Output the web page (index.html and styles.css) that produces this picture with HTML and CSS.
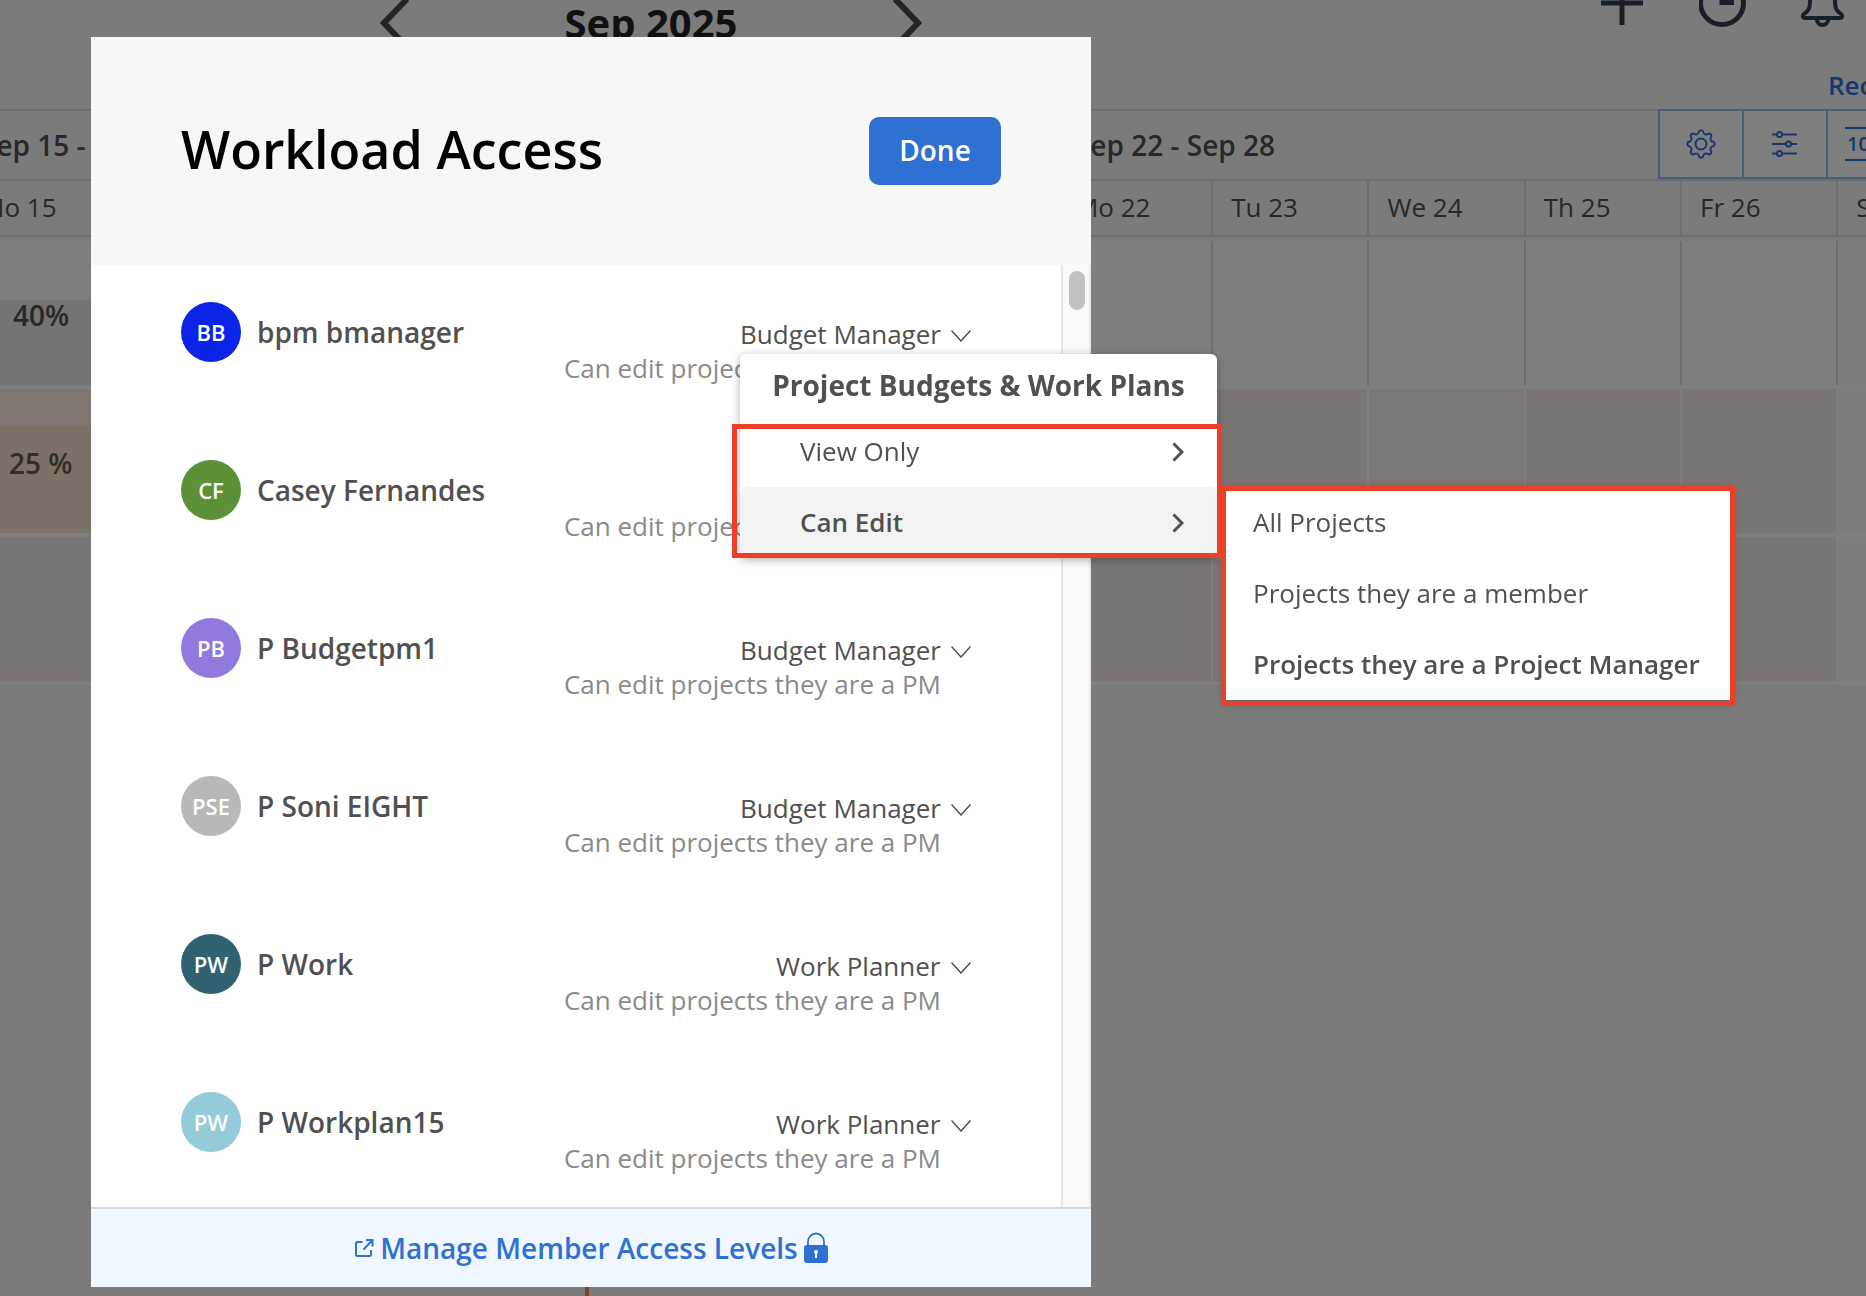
FILE: index.html
```html
<!DOCTYPE html>
<html lang="en">
<head>
    <meta charset="UTF-8">
    <meta name="viewport" content="width=device-width, initial-scale=1.0">
    <title>Workload Access</title>
    <link rel="stylesheet" href="styles.css">
</head>
<body>
    <div class="page">
        <header class="topbar">
            <div class="month-nav">
                <button class="icon-btn" aria-label="Previous month">
                    <svg width="30" height="52" viewBox="0 0 30 52"><path d="M27 2 4 26l23 24"/></svg>
                </button>
                <h2>Sep 2025</h2>
                <button class="icon-btn" aria-label="Next month">
                    <svg width="30" height="52" viewBox="0 0 30 52"><path d="M3 2l23 24L3 50"/></svg>
                </button>
            </div>
            <div class="tools">
                <button class="icon-btn" aria-label="Add">
                    <svg width="48" height="48" viewBox="0 0 48 48"><path d="M23 1v45M2 24h42"/></svg>
                </button>
                <button class="icon-btn" aria-label="Timer">
                    <svg width="48" height="48" viewBox="0 0 48 48"><circle cx="23" cy="24" r="21.500"/><path d="M23 10v13.500h12"/></svg>
                </button>
                <button class="icon-btn thin" aria-label="Notifications">
                    <svg width="48" height="48" viewBox="0 0 48 48"><path d="M23.500 4c-8 0-12.500 6-12.500 13v6c0 7-2 9-6 12-2 2-1 4 1 4h35c2 0 3-2 1-4-4-3-6-5-6-12v-6c0-7-4.500-13-12.500-13zM17.500 40c1 8 11 8 12 0"/></svg>
                </button>
            </div>
            <a class="recent" href="#">Rec</a>
        </header>

        <div class="calendar">
            <div class="weeks">
                <div class="week">Sep 15 -</div>
                <div class="week">Sep 22 - Sep 28</div>
            </div>
            <div class="toolbar">
                <button aria-label="Settings">
                    <svg width="32" height="32" viewBox="-16 -16 32 32">
                        <defs><path id="tooth" d="M-4-9.700Q-2.400-10.400-2.200-12 -1.900-13.700 0-13.700 1.900-13.700 2.200-12 2.400-10.400 4-9.700"/></defs>
                        <circle r="5.500"/>
                        <use href="#tooth"/>
                        <use href="#tooth" transform="rotate(45)"/>
                        <use href="#tooth" transform="rotate(90)"/>
                        <use href="#tooth" transform="rotate(135)"/>
                        <use href="#tooth" transform="rotate(180)"/>
                        <use href="#tooth" transform="rotate(225)"/>
                        <use href="#tooth" transform="rotate(270)"/>
                        <use href="#tooth" transform="rotate(315)"/>
                    </svg>
                </button>
                <button aria-label="Filters">
                    <svg width="32" height="32" viewBox="0 0 32 32"><path d="M3 6.500h5M13 6.500h15M3 16h14M22 16h6M3 25.500h5M13 25.500h15"/><circle cx="10.500" cy="6.500" r="2.500"/><circle cx="19.500" cy="16" r="2.500"/><circle cx="10.500" cy="25.500" r="2.500"/></svg>
                </button>
                <button class="percent" aria-label="Percentage"><span>100</span></button>
            </div>
            <div class="days">
                <div class="day">Mo 15</div>
                <div class="day mon">Mo 22</div>
                <div class="day">Tu 23</div>
                <div class="day">We 24</div>
                <div class="day">Th 25</div>
                <div class="day">Fr 26</div>
                <div class="day">Sa 27</div>
            </div>
            <div class="row">
                <div class="cell"><div class="load gray">40%</div></div>
                <div class="cell mon"></div>
                <div class="cell"></div>
                <div class="cell"></div>
                <div class="cell"></div>
                <div class="cell"></div>
                <div class="cell weekend"></div>
            </div>
            <div class="row over">
                <div class="cell peach"><div class="load orange">25 %</div></div>
                <div class="cell mon"></div>
                <div class="cell"></div>
                <div class="cell alt"></div>
                <div class="cell"></div>
                <div class="cell"></div>
                <div class="cell weekend"></div>
            </div>
            <div class="row over">
                <div class="cell"></div>
                <div class="cell mon"></div>
                <div class="cell"></div>
                <div class="cell alt"></div>
                <div class="cell"></div>
                <div class="cell"></div>
                <div class="cell weekend"></div>
            </div>
        </div>
        <div class="today-line"></div>
    </div>

    <div class="overlay">
        <div class="modal" role="dialog" aria-labelledby="modal-title">
            <div class="modal-header">
                <h1 id="modal-title">Workload Access</h1>
                <button class="done">Done</button>
            </div>

            <div class="modal-body">
                <ul class="members">
                    <li class="member">
                        <span class="avatar blue">BB</span>
                        <span class="name">bpm bmanager</span>
                        <div class="access">
                            <div class="role">
                                <select aria-label="Role of bpm bmanager"><option>Budget Manager</option></select>
                                <svg width="20" height="12" viewBox="0 0 20 12"><path d="M0.500 0.500 10 11l9.500-10.500"/></svg>
                            </div>
                            <p>Can edit projects they are a PM</p>
                        </div>

                        <div class="menu">
                            <h3>Project Budgets &amp; Work Plans</h3>
                            <button class="menu-item">View Only
                                <svg width="12" height="20" viewBox="0 0 12 20"><path d="M1.500 1.500 10 10l-8.500 8.500"/></svg>
                            </button>
                            <div class="menu-group">
                                <button class="menu-item active">Can Edit
                                    <svg width="12" height="20" viewBox="0 0 12 20"><path d="M1.500 1.500 10 10l-8.500 8.500"/></svg>
                                </button>
                                <div class="submenu">
                                    <button class="menu-item">All Projects</button>
                                    <button class="menu-item">Projects they are a member</button>
                                    <button class="menu-item selected">Projects they are a Project Manager</button>
                                    <div class="mark mark-sub"></div>
                                </div>
                            </div>
                            <div class="mark mark-main"></div>
                        </div>
                    </li>
                    <li class="member">
                        <span class="avatar green">CF</span>
                        <span class="name">Casey Fernandes</span>
                        <div class="access">
                            <div class="role">
                                <select aria-label="Role of Casey Fernandes"><option>Budget Manager</option></select>
                                <svg width="20" height="12" viewBox="0 0 20 12"><path d="M0.500 0.500 10 11l9.500-10.500"/></svg>
                            </div>
                            <p>Can edit projects they are a PM</p>
                        </div>
                    </li>
                    <li class="member">
                        <span class="avatar purple">PB</span>
                        <span class="name">P Budgetpm1</span>
                        <div class="access">
                            <div class="role">
                                <select aria-label="Role of P Budgetpm1"><option>Budget Manager</option></select>
                                <svg width="20" height="12" viewBox="0 0 20 12"><path d="M0.500 0.500 10 11l9.500-10.500"/></svg>
                            </div>
                            <p>Can edit projects they are a PM</p>
                        </div>
                    </li>
                    <li class="member">
                        <span class="avatar silver">PSE</span>
                        <span class="name">P Soni EIGHT</span>
                        <div class="access">
                            <div class="role">
                                <select aria-label="Role of P Soni EIGHT"><option>Budget Manager</option></select>
                                <svg width="20" height="12" viewBox="0 0 20 12"><path d="M0.500 0.500 10 11l9.500-10.500"/></svg>
                            </div>
                            <p>Can edit projects they are a PM</p>
                        </div>
                    </li>
                    <li class="member">
                        <span class="avatar teal">PW</span>
                        <span class="name">P Work</span>
                        <div class="access">
                            <div class="role">
                                <select aria-label="Role of P Work"><option>Work Planner</option></select>
                                <svg width="20" height="12" viewBox="0 0 20 12"><path d="M0.500 0.500 10 11l9.500-10.500"/></svg>
                            </div>
                            <p>Can edit projects they are a PM</p>
                        </div>
                    </li>
                    <li class="member">
                        <span class="avatar aqua">PW</span>
                        <span class="name">P Workplan15</span>
                        <div class="access">
                            <div class="role">
                                <select aria-label="Role of P Workplan15"><option>Work Planner</option></select>
                                <svg width="20" height="12" viewBox="0 0 20 12"><path d="M0.500 0.500 10 11l9.500-10.500"/></svg>
                            </div>
                            <p>Can edit projects they are a PM</p>
                        </div>
                    </li>
                </ul>
                <div class="scrollbar"><div class="thumb"></div></div>
            </div>

            <a class="modal-footer" href="#">
                <svg class="external" width="20" height="20" viewBox="0 0 20 20"><path d="M8.500 4H3.500Q2 4 2 5.500v11Q2 18 3.500 18h12q1.500 0 1.500-1.500V12M12 2h6.500v6.500M18.500 2l-9 9.500"/></svg>
                <span>Manage Member Access Levels</span>
                <svg width="24" height="32" viewBox="0 0 24 32"><path d="M4 14V9.500a8 8 0 0 1 16 0V14" fill="none" stroke="#2f70d3" stroke-width="1.800"/><rect y="13" width="24" height="18" rx="3" fill="#2f70d3"/><path d="M12 18a2 2 0 0 1 1 3.700V26h-2v-4.300A2 2 0 0 1 12 18z" fill="#fff"/></svg>
            </a>
        </div>
    </div>
</body>
</html>
```

FILE: styles.css
```css
* {
    box-sizing: border-box;
}

body {
    margin: 0;
    font-family: 'Open Sans', 'Noto Sans', sans-serif;
    font-size: 26px;
    color: #505050;
    background-color: #f7f7f7;
}

h1, h2, h3, p, ul {
    margin: 0;
    padding: 0;
}

button, select {
    font: inherit;
    color: inherit;
    background: none;
    border: none;
    padding: 0;
    cursor: pointer;
}

a {
    text-decoration: none;
}

svg {
    display: block;
    flex-shrink: 0;
}

/* page behind the dialog */
.page {
    position: relative;
    height: 100vh;
    overflow: hidden;
    display: flex;
    flex-direction: column;
}

.topbar {
    display: grid;
    grid-template-columns: auto 1fr;
    grid-template-rows: 56px 1fr;
    height: 133px;
    margin-top: -24px;
    flex-shrink: 0;
}

.month-nav {
    display: flex;
    align-items: center;
    align-self: start;
    height: 94px;
    width: 542px;
    margin-left: 380px;
    justify-content: space-between;
    grid-row: 1 / 3;
}

.month-nav h2 {
    font-size: 40px;
    line-height: 94px;
    color: #222;
}

.icon-btn svg {
    fill: none;
    stroke: #4a4a4a;
    stroke-width: 6;
}

.tools {
    display: flex;
    justify-content: flex-end;
    gap: 52px;
    padding-right: 19px;
    height: 54px;
    align-items: center;
}

.tools .icon-btn svg {
    stroke: #323f50;
    stroke-width: 5;
}

.tools .thin svg {
    stroke-width: 4;
}

.recent {
    justify-self: end;
    align-self: end;
    width: 38px;
    overflow: hidden;
    font-weight: 600;
    line-height: 48px;
    color: #2f70d3;
}

.calendar {
    position: relative;
    border-top: 2px solid #dcdcdc;
}

.weeks, .days, .row {
    display: grid;
    grid-template-columns: repeat(14, 1fr);
    width: 117.25%;
    margin-left: -37px;
}

.weeks {
    height: 70px;
    border-bottom: 2px solid #dcdcdc;
    font-size: 28px;
    font-weight: 600;
    line-height: 68px;
}

.week {
    grid-column: span 7;
    padding-left: 18px;
}

.days {
    height: 56px;
    border-bottom: 2px solid #dcdcdc;
    margin-bottom: 4px;
    line-height: 52px;
}

.day {
    padding-left: 18px;
    border-right: 2px solid #dcdcdc;
}

.mon {
    grid-column-start: 8;
}

.row {
    height: 144px;
    margin-bottom: 4px;
    background-color: #fff;
    box-shadow: 0 4px 0 #fff;
}

.cell {
    display: flex;
    flex-direction: column;
    justify-content: flex-end;
    border-right: 2px solid #dcdcdc;
}

.over .cell {
    background-color: #f7ebea;
    border-right-color: #fff;
}

.over .alt {
    background-color: #f6eeea;
}

.over .peach {
    background-color: #ffece2;
}

.cell.weekend, .over .weekend {
    background-color: #fbfbfb;
}

.load {
    padding-left: 50px;
    font-size: 28px;
    font-weight: 600;
}

.gray {
    height: 85px;
    line-height: 30px;
    background-color: #e9e9e9;
}

.orange {
    height: 107px;
    padding-left: 46px;
    line-height: 74px;
    background-color: #f9e3cc;
    color: #6a5a48;
}

.toolbar {
    position: absolute;
    top: -2px;
    right: -48px;
    display: flex;
    height: 70px;
    border: 2px solid #94bdf8;
}

.toolbar button {
    width: 84px;
    display: flex;
    align-items: center;
    justify-content: center;
    background-color: #fff;
    border-right: 2px solid #94bdf8;
}

.toolbar svg {
    fill: none;
    stroke: #2f70d3;
    stroke-width: 2;
}

.toolbar .percent {
    justify-content: flex-start;
    padding-left: 17px;
    font-size: 20px;
    font-weight: 600;
    line-height: 30px;
    color: #2f70d3;
}

.percent span {
    padding-left: 2px;
    border: 2px solid #2f70d3;
    border-width: 2px 0;
}

.today-line {
    width: 4px;
    flex: 1;
    margin-left: 585px;
    background-color: #f08c40;
}

/* dialog */
.overlay {
    position: fixed;
    inset: 0;
    padding: 37px 0 9px 91px;
    background-color: rgba(0, 0, 0, 0.5);
}

.modal {
    display: flex;
    flex-direction: column;
    width: 1000px;
    height: 100%;
    background-color: #fff;
}

.modal-header {
    display: flex;
    align-items: center;
    justify-content: space-between;
    padding: 80px 90px;
    background-color: #f7f7f7;
}

.modal-header h1 {
    padding-bottom: 4px;
    font-size: 52px;
    font-weight: 600;
    line-height: 64px;
    color: #000;
}

.done {
    width: 132px;
    height: 68px;
    padding-bottom: 2px;
    border-radius: 10px;
    background-color: #2f70d3;
    color: #fff;
    font-size: 28px;
    font-weight: 600;
}

.modal-body {
    display: flex;
    flex: 1;
    min-height: 0;
}

.members {
    flex: 1;
    display: flex;
    flex-direction: column;
    gap: 74px;
    padding: 37px 90px 0;
    list-style: none;
}

.member {
    position: relative;
    display: flex;
    align-items: flex-start;
    height: 84px;
}

.avatar {
    width: 60px;
    border-radius: 50%;
    color: #fff;
    font-size: 22px;
    font-weight: 600;
    line-height: 60px;
    text-align: center;
}

.blue { background-color: #0b24e8; }
.green { background-color: #5c9138; }
.purple { background-color: #9279de; }
.silver { background-color: #b9b7b8; }
.teal { background-color: #306272; }
.aqua { background-color: #93cbd8; }

.name {
    margin-left: 16px;
    font-size: 28px;
    font-weight: 600;
    line-height: 60px;
}

.access {
    margin-left: auto;
    padding-top: 15px;
    line-height: 34px;
}

.role {
    display: flex;
    justify-content: flex-end;
    align-items: center;
    gap: 10px;
}

.role select {
    appearance: none;
    height: 34px;
    line-height: 34px;
}

.role svg {
    margin-top: 4px;
    fill: none;
    stroke: #505050;
    stroke-width: 1.5;
}

.access p {
    padding-right: 30px;
    color: #8a8a8a;
}

.scrollbar {
    width: 30px;
    padding: 6px 4px 0 6px;
    background-color: #fafafa;
    border: 2px solid #e8e8e8;
    border-width: 0 2px;
}

.thumb {
    width: 16px;
    height: 39px;
    border-radius: 8px;
    background-color: #c1c1c1;
}

.modal-footer {
    display: flex;
    align-items: center;
    justify-content: center;
    gap: 6px;
    height: 80px;
    border-top: 2px solid #d9d9d9;
    background-color: #f0f7ff;
    color: #2f70d3;
    font-size: 28px;
    font-weight: 600;
}

.external {
    fill: none;
    stroke: #2f70d3;
    stroke-width: 2;
}

/* access menu */
.menu {
    position: absolute;
    top: 52px;
    right: -246px;
    z-index: 2;
    width: 477px;
    border-radius: 6px;
    background-color: #fff;
    box-shadow: 0 2px 10px rgba(0, 0, 0, 0.3);
}

.menu h3 {
    font-size: 28px;
    line-height: 62px;
    text-align: center;
}

.menu-item {
    display: flex;
    align-items: center;
    justify-content: space-between;
    width: 100%;
    height: 71px;
    padding: 0 33px 2px 60px;
    white-space: nowrap;
}

.menu-item svg {
    margin-top: 2px;
    fill: none;
    stroke: #505050;
    stroke-width: 3;
}

.active {
    background-color: #f3f3f3;
    border-radius: 6px;
    font-weight: 600;
}

.menu-group {
    position: relative;
}

.submenu {
    position: absolute;
    top: 0;
    left: calc(100% + 8px);
    width: 506px;
    background-color: #fff;
    box-shadow: 0 2px 10px rgba(0, 0, 0, 0.3);
}

.submenu .menu-item {
    padding: 0 28px 2px;
}

.selected {
    font-weight: 600;
}

.mark {
    position: absolute;
    border: 5px solid #eb4026;
    pointer-events: none;
}

.mark-main {
    inset: 70px -5px 0 -8px;
}

.mark-sub {
    inset: -1px -4px -6px -4px;
}
```
